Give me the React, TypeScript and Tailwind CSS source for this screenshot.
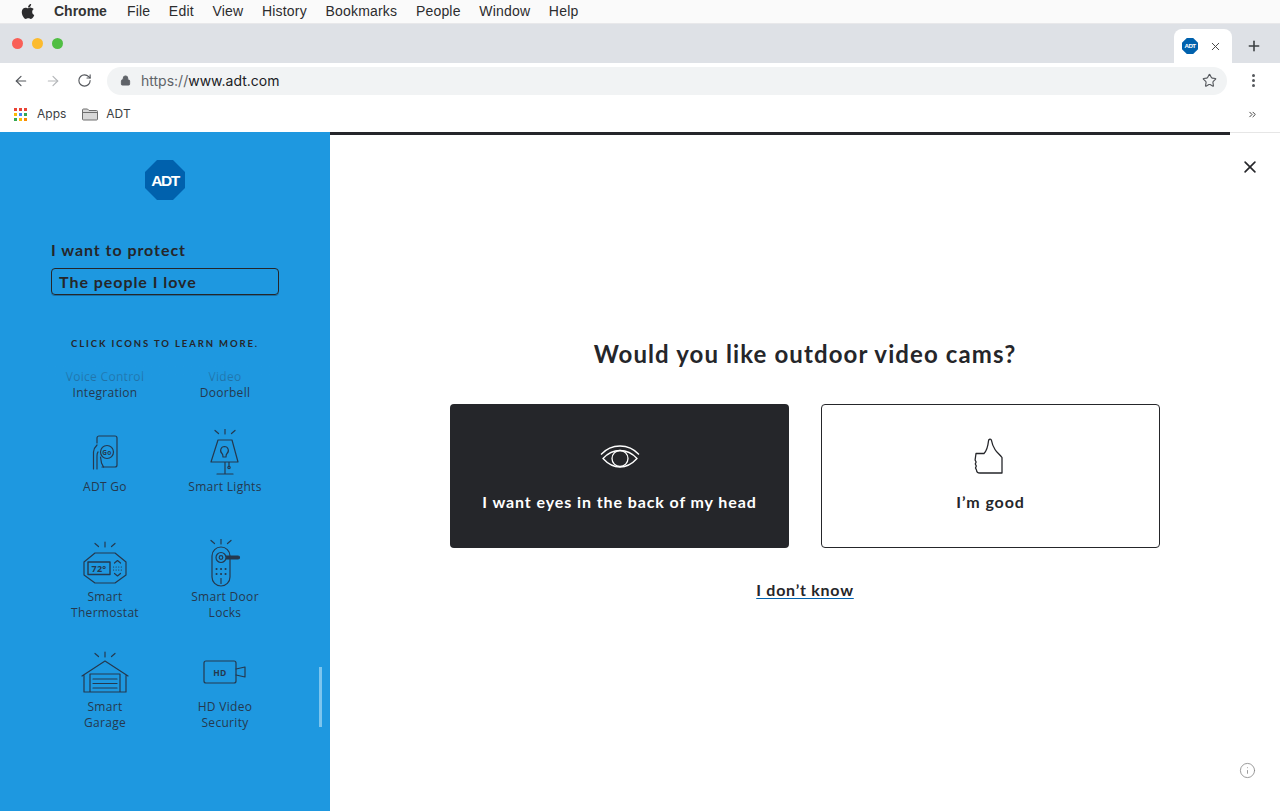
import React from "react";
import { FaApple } from "react-icons/fa";
import { ArrowLeft, ArrowRight, RotateCw, Lock, Star, X, Plus, ChevronsRight, Info } from "lucide-react";

const Adt = ({ size }: { size: number }) => (
  <svg width={size} height={size} viewBox="0 0 40 40" className="block">
    <polygon points="12,0 28,0 40,12 40,28 28,40 12,40 0,28 0,12" fill="#0061ad" />
    <text x="20" y="25.500" textAnchor="middle" fill="#fff" fontFamily="Liberation Sans, sans-serif" fontWeight="700" fontSize="15.500" letterSpacing="-1.400">ADT</text>
  </svg>
);

const ink = "#25394f";
const s = { fill: "none", stroke: ink, strokeWidth: 1.2, strokeLinecap: "round" as const, strokeLinejoin: "round" as const };

const Rays = ({ cx, y }: { cx: number; y: number }) => (
  <path {...s} d={`M${cx} ${y}v5M${cx - 10} ${y + 1.5}l3.500 3M${cx + 10} ${y + 1.5}l-3.500 3`} />
);

const GoIcon = () => (
  <svg width="60" height="50" viewBox="0 0 60 50">
    <path {...s} d="M22 14V9a2 2 0 0 1 2-2h16a2 2 0 0 1 2 2v27a2 2 0 0 1-2 2H27" />
    <circle {...s} cx="32" cy="23" r="6.500" />
    <text x="32" y="25.500" textAnchor="middle" fontSize="6.500" fontWeight="700" fontFamily="Open Sans, sans-serif" fill={ink}>Go</text>
    <path {...s} d="M18.500 40V23c0-3 1.500-5 3.500-7M22 40V27c0-2 0-3 1-4M25.500 28l1 6 2 4" />
  </svg>
);
const LampIcon = () => (
  <svg width="60" height="50" viewBox="0 0 60 50">
    <Rays cx={30} y={0} />
    <path {...s} d="M23 11h14l6 22H16zM30 33v12M22 45h16M34 33v4" />
    <circle cx="34" cy="38.500" r="1.200" {...s} />
    <path {...s} d="M29.500 17.500a4 4 0 0 0-2.500 7c1 1 1 2 1 3.500h3c0-1.500 0-2.500 1-3.500a4 4 0 0 0-2.500-7z" />
  </svg>
);
const ThermoIcon = () => (
  <svg width="60" height="50" viewBox="0 0 60 50">
    <Rays cx={30} y={3} />
    <path {...s} d="M20 14h20l11 9v13l-11 8H20L9 36V23z" />
    <rect {...s} x="13" y="23" width="22" height="12.500" strokeWidth={1.400} />
    <text x="24" y="32.500" textAnchor="middle" fontSize="9" fontWeight="700" fontFamily="Open Sans, sans-serif" fill={ink}>72°</text>
    <path {...s} d="M39.500 24l3-2.500 3 2.500M39.500 34.500l3 2.500 3-2.500" />
    <path {...s} strokeDasharray="0.100 2.500" d="M38.500 28h8M38.500 31h8" />
  </svg>
);
const LockIcon = () => (
  <svg width="60" height="50" viewBox="0 0 60 50">
    <Rays cx={26} y={0} />
    <rect {...s} x="17" y="8" width="18" height="39" rx="9" />
    <circle {...s} cx="26" cy="18.500" r="5" />
    <circle {...s} cx="26" cy="18.500" r="1.800" />
    <path {...s} d="M31 17h12a1.500 1.500 0 0 1 0 3H31" fill="#25394f" />
    <path {...s} strokeWidth={2} strokeDasharray="0.100 4.400" d="M21.500 30h10M21.500 35h10" />
    <path {...s} d="M26 39.500v5" />
  </svg>
);
const GarageIcon = () => (
  <svg width="60" height="50" viewBox="0 0 60 50">
    <Rays cx={30} y={3} />
    <path {...s} d="M7 27l23-15 23 15M9 26v17h42V26M15 43V25h30v18M18 30h24M18 34.500h24M18 39h24" />
  </svg>
);
const CamIcon = () => (
  <svg width="60" height="50" viewBox="0 0 60 50">
    <rect {...s} x="9" y="12" width="32" height="22" rx="2" />
    <text x="25" y="26.500" textAnchor="middle" fontSize="8.500" fontWeight="700" fontFamily="Open Sans, sans-serif" fill={ink}>HD</text>
    <path {...s} d="M41 20l9-2v10l-9-2" />
  </svg>
);
const Blank = () => <div className="h-[50px]" />;

const features = [
  { a: "Voice Control", b: "Integration", Icon: Blank },
  { a: "Video", b: "Doorbell", Icon: Blank },
  { a: "ADT Go", Icon: GoIcon },
  { a: "Smart Lights", Icon: LampIcon },
  { a: "Smart", b: "Thermostat", Icon: ThermoIcon },
  { a: "Smart Door", b: "Locks", Icon: LockIcon },
  { a: "Smart", b: "Garage", Icon: GarageIcon },
  { a: "HD Video", b: "Security", Icon: CamIcon },
];

const menus = ["File", "Edit", "View", "History", "Bookmarks", "People", "Window", "Help"];

const Apps = () => {
  const c = ["#ea4335", "#ea4335", "#ea4335", "#fbbc05", "#4285f4", "#34a853", "#34a853", "#fbbc05", "#fb8c00"];
  return (
    <div className="grid grid-cols-3 gap-[2px] w-[13px]">
      {c.map((x, i) => (
        <span key={i} className="w-[3px] h-[3px]" style={{ backgroundColor: x }} />
      ))}
    </div>
  );
};

export default function App() {
  return (
    <div className="w-[1280px] h-[811px] overflow-hidden flex flex-col bg-white font-['Inter',sans-serif] text-[#25262a]">
      <div className="h-[23px] shrink-0 bg-[#fafafa] flex items-center pl-[20px] text-[14px] font-['Liberation_Sans',sans-serif] text-[#2c2c2e]">
        <FaApple className="w-[16px] h-[17px] mr-[18px] -mt-[1px]" />
        <span className="font-bold mr-[20px] text-[#333]">Chrome</span>
        <div className="flex gap-[18.600px] tracking-[0.2px]">
          {menus.map((m) => (
            <span key={m}>{m}</span>
          ))}
        </div>
      </div>

      <div className="h-[40px] shrink-0 bg-[#dee1e6] border-t border-[#e8e8ea] flex items-start pl-[12px] pr-[18px]">
        <div className="flex gap-[9px] mt-[14px]">
          <span className="w-[11px] h-[11px] rounded-full bg-[#f95f57]" />
          <span className="w-[11px] h-[11px] rounded-full bg-[#fcbb2e]" />
          <span className="w-[11px] h-[11px] rounded-full bg-[#50be43]" />
        </div>
        <div className="ml-auto flex items-center">
          <div className="mt-[5px] w-[58px] h-[34px] bg-white rounded-t-[8px] flex items-center pl-[8px] gap-[11px]">
            <Adt size={16} />
            <X className="w-[13px] h-[13px] text-[#444]" strokeWidth={1.800} />
          </div>
          <Plus className="ml-[14px] mt-[5px] w-[16px] h-[16px] text-[#3c4043]" strokeWidth={2.400} />
        </div>
      </div>

      <div className="h-[33px] shrink-0 bg-white flex items-center pl-[13px] pr-[18px] pt-[2px]">
        <ArrowLeft className="w-[16px] h-[16px] text-[#55585d]" strokeWidth={1.800} />
        <ArrowRight className="ml-[16px] w-[16px] h-[16px] text-[#b5b7ba]" strokeWidth={1.800} />
        <RotateCw className="ml-[16px] w-[15px] h-[15px] text-[#55585d]" strokeWidth={1.800} />
        <div className="ml-[15px] w-[1120px] h-[28px] rounded-full bg-[#f1f3f4] flex items-center pl-[13px] pr-[10px] text-[14px]">
          <Lock className="w-[11px] h-[11px] text-[#5f6368] fill-[#5f6368]" strokeWidth={2} />
          <span className="ml-[10px] text-[#5f6368]">https://</span>
          <span className="text-[#202124]">www.adt.com</span>
          <Star className="ml-auto w-[15px] h-[15px] text-[#55585d]" strokeWidth={1.800} />
        </div>
        <div className="ml-[25px] flex flex-col gap-[2px]">
          <span className="w-[3px] h-[3px] rounded-full bg-[#55585d]" />
          <span className="w-[3px] h-[3px] rounded-full bg-[#55585d]" />
          <span className="w-[3px] h-[3px] rounded-full bg-[#55585d]" />
        </div>
      </div>

      <div className="h-[36px] shrink-0 bg-white flex items-center pl-[14px] pr-[22px] text-[12px] text-[#3c4043]">
        <Apps />
        <span className="ml-[10px]">Apps</span>
        <svg width="16" height="13" viewBox="0 0 16 13" className="ml-[16px]">
          <path d="M.5 2a1 1 0 0 1 1-1h4l1.500 1.500h7.500a1 1 0 0 1 1 1V11a1 1 0 0 1-1 1h-13a1 1 0 0 1-1-1z" fill="#d8d8d8" stroke="#6e6e6e" />
          <path d="M1 4.500h14" stroke="#6e6e6e" />
        </svg>
        <span className="ml-[8px]">ADT</span>
        <ChevronsRight className="ml-auto w-[11px] h-[11px] text-[#333]" strokeWidth={2} />
      </div>

      <div className="flex-1 min-h-0 flex">
        <aside className="relative w-[330px] shrink-0 bg-[#1e98e0] flex flex-col items-center text-[#25262a]">
          <div className="mt-[28px]">
            <Adt size={40} />
          </div>
          <div className="w-[228px] mt-[39px] font-['Lato',sans-serif] font-bold text-[16px] tracking-[0.95px]">
            <div className="h-[22px] leading-[22px]">I want to protect</div>
            <div className="mt-[7px] h-[27px] leading-[25px] border border-[#25262a] rounded-[4px] pl-[7px] shadow-[0_1px_0_#1a6fa3]">The people I love</div>
          </div>
          <div className="mt-[42px] text-[9.500px] leading-[14px] font-['Lato',sans-serif] font-bold tracking-[1.880px]">CLICK ICONS TO LEARN MORE.</div>
          <div className="relative mt-[12px] w-[240px] h-[390px] overflow-hidden">
            <div className="grid grid-cols-2 auto-rows-[110px] -mt-[44px] font-['Open_Sans',sans-serif] text-[12px] leading-[16px] tracking-[0.3px] text-[#25394f]">
              {features.map(({ a, b, Icon }) => (
                <div key={a} className="flex flex-col items-center text-center">
                  <Icon />
                  <div>{a}</div>
                  {b && <div>{b}</div>}
                </div>
              ))}
            </div>
            <div className="absolute inset-x-0 top-0 h-[23px] bg-gradient-to-b from-[#1e98e0]/90 to-[#1e98e0]/50" />
          </div>
          <div className="absolute left-[319px] top-[535px] w-[3px] h-[60px] bg-[#7cc5ee]" />
        </aside>

        <main className="relative flex-1 flex flex-col items-center border-t border-[#e6e6e6]">
          <div className="self-start w-[900px] h-[3px] -mt-[1px] bg-[#25262a]" />
          <X className="absolute right-[23px] top-[27px] w-[14px] h-[14px] scale-[1.4] text-[#25262a]" strokeWidth={2} />
          <h1 className="mt-[203px] h-[32px] leading-[32px] text-[24px] font-bold font-['Lato',sans-serif] tracking-[1.1px]">Would you like outdoor video cams?</h1>
          <div className="mt-[34px] flex gap-[32px] font-['Lato',sans-serif] font-bold text-[16px] tracking-[0.9px]">
            <button className="w-[339px] h-[144px] rounded-[4px] bg-[#25262a] text-white flex flex-col items-center pt-[40px]">
              <svg width="40" height="26" viewBox="0 0 40 26" fill="none" stroke="#fff" strokeWidth="1.300">
                <path d="M1 10.500C7 4 13 2 20 2s13 2 19 8.500" />
                <path d="M3 14.500C8 9 14 6.500 20 6.500S32 9 37 14.500C32 20 26 23 20 23S8 20 3 14.500z" />
                <circle cx="20" cy="14.500" r="8" />
              </svg>
              <span className="mt-[22px] leading-[20px]">I want eyes in the back of my head</span>
            </button>
            <button className="w-[339px] h-[144px] rounded-[4px] border border-[#25262a] flex flex-col items-center pt-[31px]">
              <svg width="32" height="39" viewBox="0 0 32 39" fill="none" stroke="#25262a" strokeWidth="1.300" strokeLinejoin="round" className="-ml-[4px]">
                <path d="M3 17.500h8c2-2 4-8 4.500-12.500 0-2 2.500-2.500 3-.500.5 3 1 5 3.500 9 2 3.500 5 5 7 8v15.500H7c-2 0-3.500-1-3.500-3l-1-2 .8-2-1-2 .8-2-1-2z" />
              </svg>
              <span className="mt-[17px] leading-[20px]">I’m good</span>
            </button>
          </div>
          <a className="mt-[32px] leading-[20px] font-['Lato',sans-serif] font-bold text-[16px] tracking-[0.75px] underline underline-offset-2 decoration-[#0061ad]">I don’t know</a>
          <Info className="absolute right-[24px] bottom-[32px] w-[17px] h-[17px] text-[#8a8a8a]" strokeWidth={1.200} />
        </main>
      </div>
    </div>
  );
}
